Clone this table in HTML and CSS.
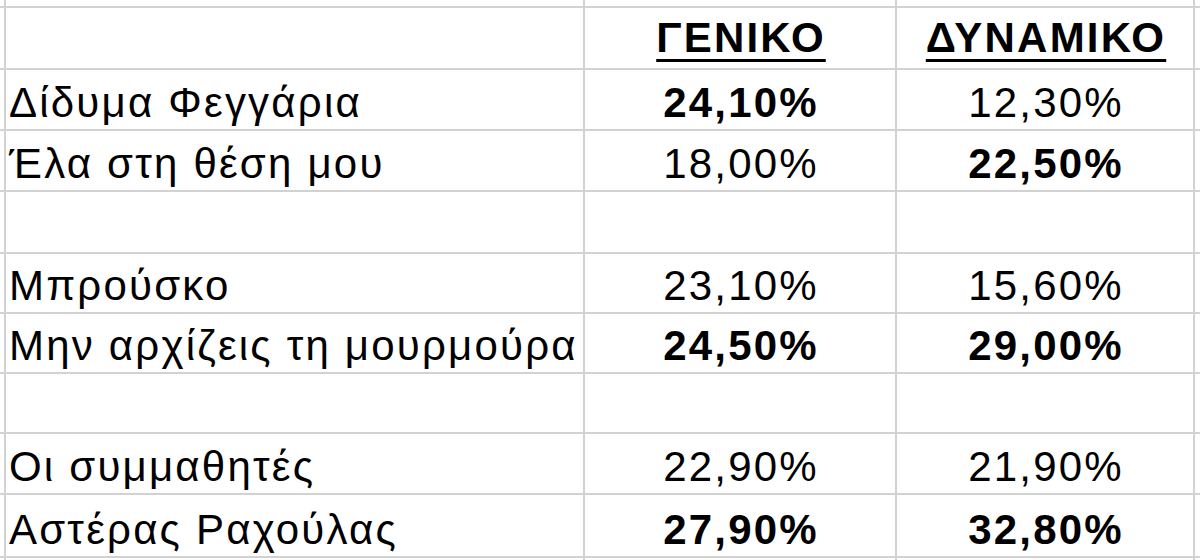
FILE: index.html
```html
<!DOCTYPE html>
<html lang="el">
<head>
<meta charset="utf-8">
<link rel="stylesheet" href="styles.css">
</head>
<body>
<div class="sheet">
  <div class="c"></div><div class="c"></div><div class="c"></div><div class="c"></div><div class="c"></div>

  <div class="c"></div><div class="c"></div><div class="c num head"><span class="hd">ΓΕΝΙΚΟ</span></div><div class="c num head"><span class="hd">ΔΥΝΑΜΙΚΟ</span></div><div class="c"></div>

  <div class="c"></div><div class="c lbl">Δίδυμα Φεγγάρια</div><div class="c num b">24,10%</div><div class="c num">12,30%</div><div class="c"></div>

  <div class="c"></div><div class="c lbl">Έλα στη θέση μου</div><div class="c num">18,00%</div><div class="c num b">22,50%</div><div class="c"></div>

  <div class="c"></div><div class="c"></div><div class="c"></div><div class="c"></div><div class="c"></div>

  <div class="c"></div><div class="c lbl">Μπρούσκο</div><div class="c num">23,10%</div><div class="c num">15,60%</div><div class="c"></div>

  <div class="c"></div><div class="c lbl">Μην αρχίζεις τη μουρμούρα</div><div class="c num b">24,50%</div><div class="c num b">29,00%</div><div class="c"></div>

  <div class="c"></div><div class="c"></div><div class="c"></div><div class="c"></div><div class="c"></div>

  <div class="c"></div><div class="c lbl">Οι συμμαθητές</div><div class="c num">22,90%</div><div class="c num">21,90%</div><div class="c"></div>

  <div class="c"></div><div class="c lbl">Αστέρας Ραχούλας</div><div class="c num b">27,90%</div><div class="c num b">32,80%</div><div class="c"></div>

  <div class="c"></div><div class="c"></div><div class="c"></div><div class="c"></div><div class="c"></div>
</div>
</body>
</html>
```
FILE: styles.css
```css
html, body {
  margin: 0;
  padding: 0;
  background: #ffffff;
}
body {
  width: 1200px;
  height: 560px;
  overflow: hidden;
}
.sheet {
  display: grid;
  grid-template-columns: 4px 577px 310px 296px 6px;
  grid-template-rows: 6px 60px 59px 59px 60px 58px 58px 58px 59px 61px 10px;
  gap: 2px;
  background: #d2d2d2;
  font-family: "Liberation Sans", Arial, sans-serif;
  font-size: 42px;
  letter-spacing: 2.2px;
  color: #000000;
}
.c {
  background: #ffffff;
  display: flex;
  align-items: flex-end;
  white-space: nowrap;
  overflow: hidden;
  line-height: 1;
  padding-bottom: 5px;
}
.lbl {
  padding-left: 3px;
}
.num {
  justify-content: center;
  padding-left: 2px;
}
.b {
  font-weight: bold;
}
.head {
  padding-bottom: 9px;
}
.hd {
  font-weight: bold;
  text-decoration: underline;
  text-decoration-thickness: 3px;
  text-underline-offset: 7px;
}
```
